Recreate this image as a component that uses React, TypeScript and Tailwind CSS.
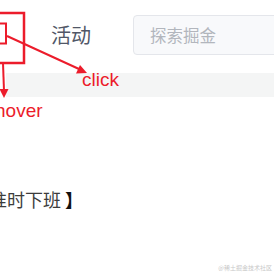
import React from "react";

export default function App() {
  const red = "#ec1c2b";
  return (
    <div
      className="relative w-[274px] h-[274px] overflow-hidden bg-white"
      style={{ fontFamily: '"Noto Sans CJK SC", "Noto Sans", sans-serif' }}
    >
      {/* header */}
      <div className="flex items-start h-[73px] pt-[15px] bg-white">
        <div className="mt-[10px] w-[5px] h-[17px] bg-[#2f8df5] relative overflow-hidden">
          <div className="absolute left-[1px] top-[3px] w-[1px] h-[11px] bg-white/80" />
          <div className="absolute left-0 top-[8px] w-[3px] h-[1px] bg-white/80" />
        </div>
        <div className="ml-[51px] h-[40px] leading-[40px] text-[20px] text-[#515767] whitespace-nowrap">
          活动
        </div>
        <div className="ml-[42px] w-[170px] h-[40px] shrink-0 rounded-[4px] border border-[#e4e6eb] bg-[#f8f9fb] pl-[16px] flex items-center">
          <span className="text-[16.5px] text-[#b2b6bd] whitespace-nowrap">探索掘金</span>
        </div>
      </div>
      {/* gray band */}
      <div className="ml-[6px] h-[24px] bg-[#f4f5f5]" />
      {/* content */}
      <div className="pt-[90px]">
        <div className="-ml-[11px] text-[18px] leading-[24px] text-[#3c3c3c] whitespace-nowrap">
          准时下班 <span className="text-[#111] font-bold">】</span>
        </div>
      </div>
      {/* watermark */}
      <div className="absolute right-[2px] bottom-[3px] text-[6px] leading-[7px] text-[#c8c8c8] whitespace-nowrap">
        @稀土掘金技术社区
      </div>

      {/* annotations */}
      <svg className="absolute inset-0" width="274" height="274" viewBox="0 0 274 274">
        <rect x="-10" y="13" width="34" height="50" fill="none" stroke={red} strokeWidth="2.5" />
        <rect x="-4" y="23.5" width="10" height="20" fill="none" stroke={red} strokeWidth="2" />
        <line x1="7" y1="36" x2="79" y2="69" stroke={red} strokeWidth="2" />
        <polygon points="87,73 76,73.5 80,65" fill={red} />
        <line x1="3" y1="63" x2="4" y2="91" stroke={red} strokeWidth="2" />
        <polygon points="4,98 -0.5,89 8.5,89" fill={red} />
      </svg>
      <div
        className="absolute left-[82px] top-[70px] text-[19px] leading-[19px] whitespace-nowrap"
        style={{ color: red, fontFamily: '"Liberation Sans", Arial, sans-serif' }}
      >
        click
      </div>
      <div
        className="absolute left-[-5px] top-[101px] text-[19px] leading-[19px] whitespace-nowrap"
        style={{ color: red, fontFamily: '"Liberation Sans", Arial, sans-serif' }}
      >
        hover
      </div>
    </div>
  );
}
